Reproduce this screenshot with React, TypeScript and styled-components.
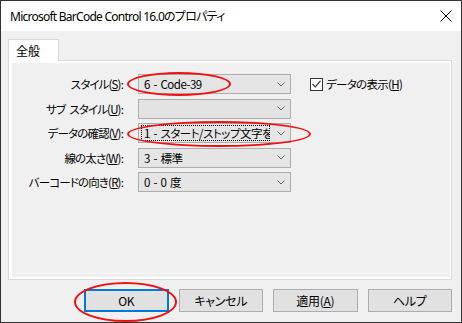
import React from "react";
import styled, { createGlobalStyle } from "styled-components";

const Global = createGlobalStyle`
  html, body { margin: 0; padding: 0; background: #f0f0f0; }
  #root { width: 462px; height: 323px; }
`;

const UI_FONT = `"Noto Sans CJK JP", "Noto Sans", sans-serif`;

const Window = styled.div`
  position: relative;
  box-sizing: border-box;
  width: 462px;
  height: 323px;
  border: 1px solid #333333;
  background: #f0f0f0;
  display: flex;
  flex-direction: column;
  font-family: ${UI_FONT};
  font-size: 12px;
  color: #000;
  overflow: hidden;
`;

const TitleBar = styled.div`
  height: 30px;
  flex: none;
  background: #ffffff;
  display: flex;
  align-items: center;
  justify-content: space-between;
  padding: 0 8px 0 8px;
`;

const TitleText = styled.div`
  font-family: "Noto Sans", "Noto Sans CJK JP", sans-serif;
  font-size: 12px;
  color: #000;
  font-feature-settings: "palt";
  letter-spacing: -0.75px;
  padding-left: 1px;
`;

const CloseIcon = styled.svg`
  width: 12px;
  height: 12px;
  margin-right: 1px;
`;

const Body = styled.div`
  flex: 1;
  display: flex;
  flex-direction: column;
  padding: 8px 9px 0 7px;
`;

const TabStrip = styled.div`
  display: flex;
  height: 22px;
  position: relative;
  z-index: 1;
  margin-bottom: -1px;
`;

const Tab = styled.div`
  box-sizing: border-box;
  width: 51px;
  height: 22px;
  background: #ffffff;
  border: 1px solid #d9d9d9;
  border-bottom: none;
  padding: 3px 0 0 7px;
  font-size: 12px;
  line-height: 16px;
`;

const Panel = styled.div`
  box-sizing: border-box;
  height: 220px;
  border: 1px solid #d9d9d9;
  background: #ffffff;
  padding: 2px 1px 2px 3px;
  display: flex;
`;

const Page = styled.div`
  flex: 1;
  background: #f0f0f0;
  padding: 11px 0 0 0;
`;

const FormGrid = styled.div`
  display: grid;
  grid-template-columns: 112px 153px auto;
  column-gap: 14px;
  row-gap: 4.5px;
  grid-auto-rows: 20px;
  align-items: center;
`;

const Label = styled.div`
  text-align: right;
  white-space: nowrap;
  font-size: 11.5px;
  font-feature-settings: "palt";
  letter-spacing: -0.85px;
  line-height: 16px;
  padding-right: 1px;
`;

const Gap = styled.span`
  display: inline-block;
  width: 4px;
`;

const Combo = styled.div<{ $disabled?: boolean }>`
  box-sizing: border-box;
  height: 20px;
  border: 1px solid #adadad;
  background: ${(p) => (p.$disabled ? "#e3e3e3" : "#e5e5e5")};
  display: flex;
  align-items: center;
  padding: 0 0 0 3px;
  overflow: hidden;
`;

const ComboText = styled.div<{ $focus?: boolean }>`
  flex: 1;
  min-width: 0;
  height: 14px;
  line-height: 14px;
  white-space: nowrap;
  overflow: hidden;
  padding-left: 2px;
  box-sizing: border-box;
  outline: ${(p) => (p.$focus ? "1px dotted #000" : "none")};
  margin-right: ${(p) => (p.$focus ? "3px" : "0")};
  font-size: 11.5px;
  font-feature-settings: "palt";
  letter-spacing: -0.5px;
  word-spacing: 1.5px;
`;

const Chevron = styled.svg`
  flex: none;
  width: 8px;
  height: 5px;
  margin: 0 5px 0 5px;
`;

const CheckRow = styled.label`
  display: flex;
  align-items: center;
  gap: 3px;
  margin-left: 5px;
  font-size: 11.5px;
  font-feature-settings: "palt";
  letter-spacing: -0.7px;
  white-space: nowrap;
`;

const CheckBox = styled.span`
  box-sizing: border-box;
  width: 13px;
  height: 13px;
  border: 1px solid #333333;
  background: #ffffff;
  display: flex;
  align-items: center;
  justify-content: center;
`;

const ButtonRow = styled.div`
  display: flex;
  gap: 10px;
  padding: 9px 0 0 76px;
`;

const Button = styled.div<{ $default?: boolean }>`
  box-sizing: border-box;
  width: 85px;
  height: 23px;
  background: #e1e1e1;
  border: ${(p) => (p.$default ? "2px solid #0078d7" : "1px solid #adadad")};
  display: flex;
  align-items: center;
  justify-content: center;
  font-size: 12px;
  font-feature-settings: "palt";
  letter-spacing: -0.3px;
`;

const Ellipse = styled.div<{ $x: number; $y: number; $w: number; $h: number }>`
  position: absolute;
  left: ${(p) => p.$x}px;
  top: ${(p) => p.$y}px;
  width: ${(p) => p.$w}px;
  height: ${(p) => p.$h}px;
  box-sizing: border-box;
  border: 2px solid #ee1111;
  border-radius: 50%;
  pointer-events: none;
`;

const ChevronIcon = () => (
  <Chevron viewBox="0 0 8 5">
    <path d="M0.5 0.5 L4 4 L7.5 0.5" fill="none" stroke="#606060" strokeWidth="1" />
  </Chevron>
);

const rows: { label: React.ReactNode; value: string; disabled?: boolean; focus?: boolean }[] = [
  { label: <>スタイル(<u>S</u>):</>, value: "6 - Code-39" },
  { label: <>サブ<Gap />スタイル(<u>U</u>):</>, value: "", disabled: true },
  { label: <>データの確認(<u>V</u>):</>, value: "1 - スタート/ストップ文字を表示", focus: true },
  { label: <>線の太さ(<u>W</u>):</>, value: "3 - 標準" },
  { label: <>バーコードの向き(<u>R</u>):</>, value: "0 - 0 度" },
];

export default function App() {
  return (
    <>
      <Global />
      <Window>
        <TitleBar>
          <TitleText>Microsoft BarCode Control 16.0のプロパティ</TitleText>
          <CloseIcon viewBox="0 0 12 12">
            <path d="M0.5 0.5 L11.5 11.5 M11.5 0.5 L0.5 11.5" stroke="#000" strokeWidth="1" fill="none" />
          </CloseIcon>
        </TitleBar>
        <Body>
          <TabStrip>
            <Tab>全般</Tab>
          </TabStrip>
          <Panel>
            <Page>
              <FormGrid>
                {rows.map((r, i) => (
                  <React.Fragment key={i}>
                    <Label>{r.label}</Label>
                    <Combo $disabled={r.disabled}>
                      <ComboText $focus={r.focus}>{r.value}</ComboText>
                      <ChevronIcon />
                    </Combo>
                    {i === 0 ? (
                      <CheckRow>
                        <CheckBox>
                          <svg width="9" height="8" viewBox="0 0 9 8">
                            <path d="M0.5 4 L3.3 6.8 L8.5 0.8" fill="none" stroke="#333" strokeWidth="1.2" />
                          </svg>
                        </CheckBox>
                        <span>データの表示(<u>H</u>)</span>
                      </CheckRow>
                    ) : (
                      <span />
                    )}
                  </React.Fragment>
                ))}
              </FormGrid>
            </Page>
          </Panel>
          <ButtonRow>
            <Button $default>OK</Button>
            <Button>キャンセル</Button>
            <Button>適用(<u>A</u>)</Button>
            <Button>ヘルプ</Button>
          </ButtonRow>
        </Body>
        <Ellipse $x={126} $y={71} $w={104} $h={24} />
        <Ellipse $x={126} $y={120} $w={184} $h={26} />
        <Ellipse $x={73} $y={281} $w={103} $h={40} />
      </Window>
    </>
  );
}
